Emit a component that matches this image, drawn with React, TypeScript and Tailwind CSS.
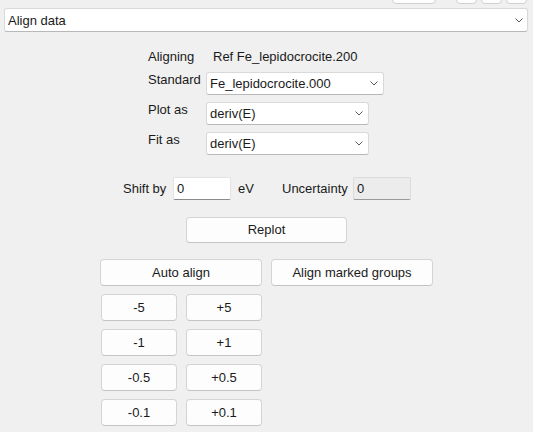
import React from "react";

const font = { fontFamily: '"Liberation Sans", Arial, sans-serif' };

function Chevron() {
  return (
    <svg width="8" height="5" viewBox="0 0 8 5" className="shrink-0">
      <path d="M0.5 0.5 L4 4 L7.5 0.5" fill="none" stroke="#5a5a5a" strokeWidth="1" />
    </svg>
  );
}

function Select({ text, className }: { text: string; className: string }) {
  return (
    <div
      className={
        "flex items-center justify-between bg-white border border-[#d9d9d9] border-b-[#b8b8b8] rounded-[3px] pl-[3px] pr-[5px] text-[13px] text-[#1a1a1a] " +
        className
      }
    >
      <span className="leading-none">{text}</span>
      <Chevron />
    </div>
  );
}

function Btn({ text, className }: { text: string; className: string }) {
  return (
    <div
      className={
        "flex items-center justify-center bg-[#fdfdfd] border border-[#d4d4d4] border-b-[#c4c4c4] rounded-[4px] text-[13px] text-[#1a1a1a] " +
        className
      }
    >
      {text}
    </div>
  );
}

export default function App() {
  return (
    <div
      className="w-[533px] h-[432px] bg-[#f0f0f0] overflow-hidden flex flex-col"
      style={font}
    >
      {/* partially visible toolbar buttons */}
      <div className="flex mt-[-20px] h-[24px] pl-[392px]">
        <div className="w-[44px] h-[24px] bg-[#fdfdfd] border border-[#d0d0d0] rounded-[4px]" />
        <div className="w-[21px] h-[24px] ml-[20px] bg-[#fdfdfd] border border-[#d0d0d0] rounded-[4px]" />
        <div className="w-[21px] h-[24px] ml-[4px] bg-[#fdfdfd] border border-[#d0d0d0] rounded-[4px]" />
        <div className="w-[21px] h-[24px] ml-[4px] bg-[#fdfdfd] border border-[#d0d0d0] rounded-[4px]" />
      </div>

      <div className="mt-[4px] ml-[4px]">
        <div className="flex items-center justify-between w-[524px] h-[24px] bg-white border border-[#d9d9d9] border-b-[#b8b8b8] rounded-[3px] pl-[3px] pr-[4px] text-[13px] text-[#1a1a1a]">
          <span className="leading-none">Align data</span>
          <Chevron />
        </div>
      </div>

      <div className="ml-[148px] mt-[16px] flex flex-col text-[13px] text-[#1a1a1a]">
        <div className="flex items-center h-[18px]">
          <span className="w-[65px] leading-[18px]">Aligning</span>
          <span className="leading-[18px]">Ref Fe_lepidocrocite.200</span>
        </div>
        <div className="flex items-start mt-[6px]">
          <span className="w-[58px] leading-[16px]">Standard</span>
          <Select text="Fe_lepidocrocite.000" className="w-[178px] h-[23px]" />
        </div>
        <div className="flex items-start mt-[7px]">
          <span className="w-[58px] leading-[16px]">Plot as</span>
          <Select text="deriv(E)" className="w-[163px] h-[23px]" />
        </div>
        <div className="flex items-start mt-[7px]">
          <span className="w-[58px] leading-[16px]">Fit as</span>
          <Select text="deriv(E)" className="w-[163px] h-[23px]" />
        </div>
      </div>

      <div className="flex items-center mt-[22px] ml-[123px] text-[13px] text-[#1a1a1a]">
        <span className="w-[50px]">Shift by</span>
        <div className="w-[58px] h-[23px] bg-white border border-[#e4e4e4] border-b-[#8a8a8a] rounded-[2px] flex items-center pl-[3px]">
          0
        </div>
        <span className="ml-[7px] w-[44px]">eV</span>
        <span className="w-[71px]">Uncertainty</span>
        <div className="w-[58px] h-[23px] bg-[#ececec] border border-[#dcdcdc] border-b-[#9a9a9a] rounded-[2px] flex items-center pl-[3px]">
          0
        </div>
      </div>

      <div className="mt-[17px] ml-[186px]">
        <Btn text="Replot" className="w-[161px] h-[26px]" />
      </div>

      <div className="flex mt-[16px] ml-[100px] gap-[9px]">
        <Btn text="Auto align" className="w-[162px] h-[27px]" />
        <Btn text="Align marked groups" className="w-[162px] h-[27px]" />
      </div>

      <div className="grid grid-cols-[76px_76px] gap-x-[9px] gap-y-[8px] mt-[8px] ml-[101px]">
        {[
          ["-5", "+5"],
          ["-1", "+1"],
          ["-0.5", "+0.5"],
          ["-0.1", "+0.1"],
        ].map(([a, b]) => (
          <React.Fragment key={a}>
            <Btn text={a} className="h-[27px]" />
            <Btn text={b} className="h-[27px]" />
          </React.Fragment>
        ))}
      </div>
    </div>
  );
}
